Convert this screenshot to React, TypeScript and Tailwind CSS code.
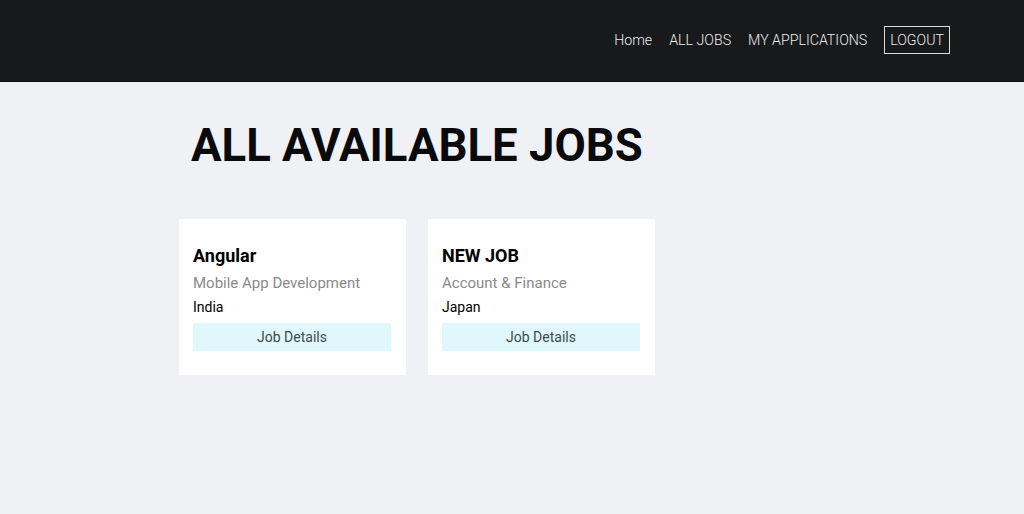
import React from 'react'

const jobs = [
  { title: 'Angular', category: 'Mobile App Development', location: 'India' },
  { title: 'NEW JOB', category: 'Account & Finance', location: 'Japan' },
]

function JobCard({ job }: { job: (typeof jobs)[number] }) {
  return (
    <div className="w-[227px] h-[156px] bg-white px-[14px] pt-[25px]">
      <h3 className="text-[18px] font-bold text-black leading-[24px]">{job.title}</h3>
      <p className="text-[15px] text-[#8a8a8a] mt-[5px] leading-[20px]">{job.category}</p>
      <p className="text-[14px] text-black mt-[4px] leading-[20px]">{job.location}</p>
      <button className="mt-[6px] w-[198px] h-[28px] bg-[#e0f8fb] text-[14px] text-[#3d4a4d]">
        Job Details
      </button>
    </div>
  )
}

export default function App() {
  return (
    <div className="min-h-[514px] bg-[#f0f1f5]" style={{ fontFamily: 'Roboto, "Liberation Sans", sans-serif' }}>
      {/* Navbar */}
      <header className="h-[82px] bg-[#18191b] border-b border-[#0e0e0f] flex items-center justify-end pr-[74px]">
        <nav className="flex items-center gap-[17px] text-[14.2px] font-light text-[#eeeeee]">
          <a href="#">Home</a>
          <a href="#">ALL JOBS</a>
          <a href="#">MY APPLICATIONS</a>
          <a href="#" className="mb-[2px] border border-[#dddddd] px-[5px] py-[3px] leading-[20px]">
            LOGOUT
          </a>
        </nav>
      </header>

      <main className="pl-[179px]">
        <h1 className="pl-[12px] pt-[37px] text-[45.5px] font-bold text-[#0a0a0c] leading-[54px]">ALL AVAILABLE JOBS</h1>
        <div className="mt-[46px] flex gap-[22px]">
          {jobs.map((job) => (
            <JobCard key={job.title} job={job} />
          ))}
        </div>
      </main>
    </div>
  )
}
